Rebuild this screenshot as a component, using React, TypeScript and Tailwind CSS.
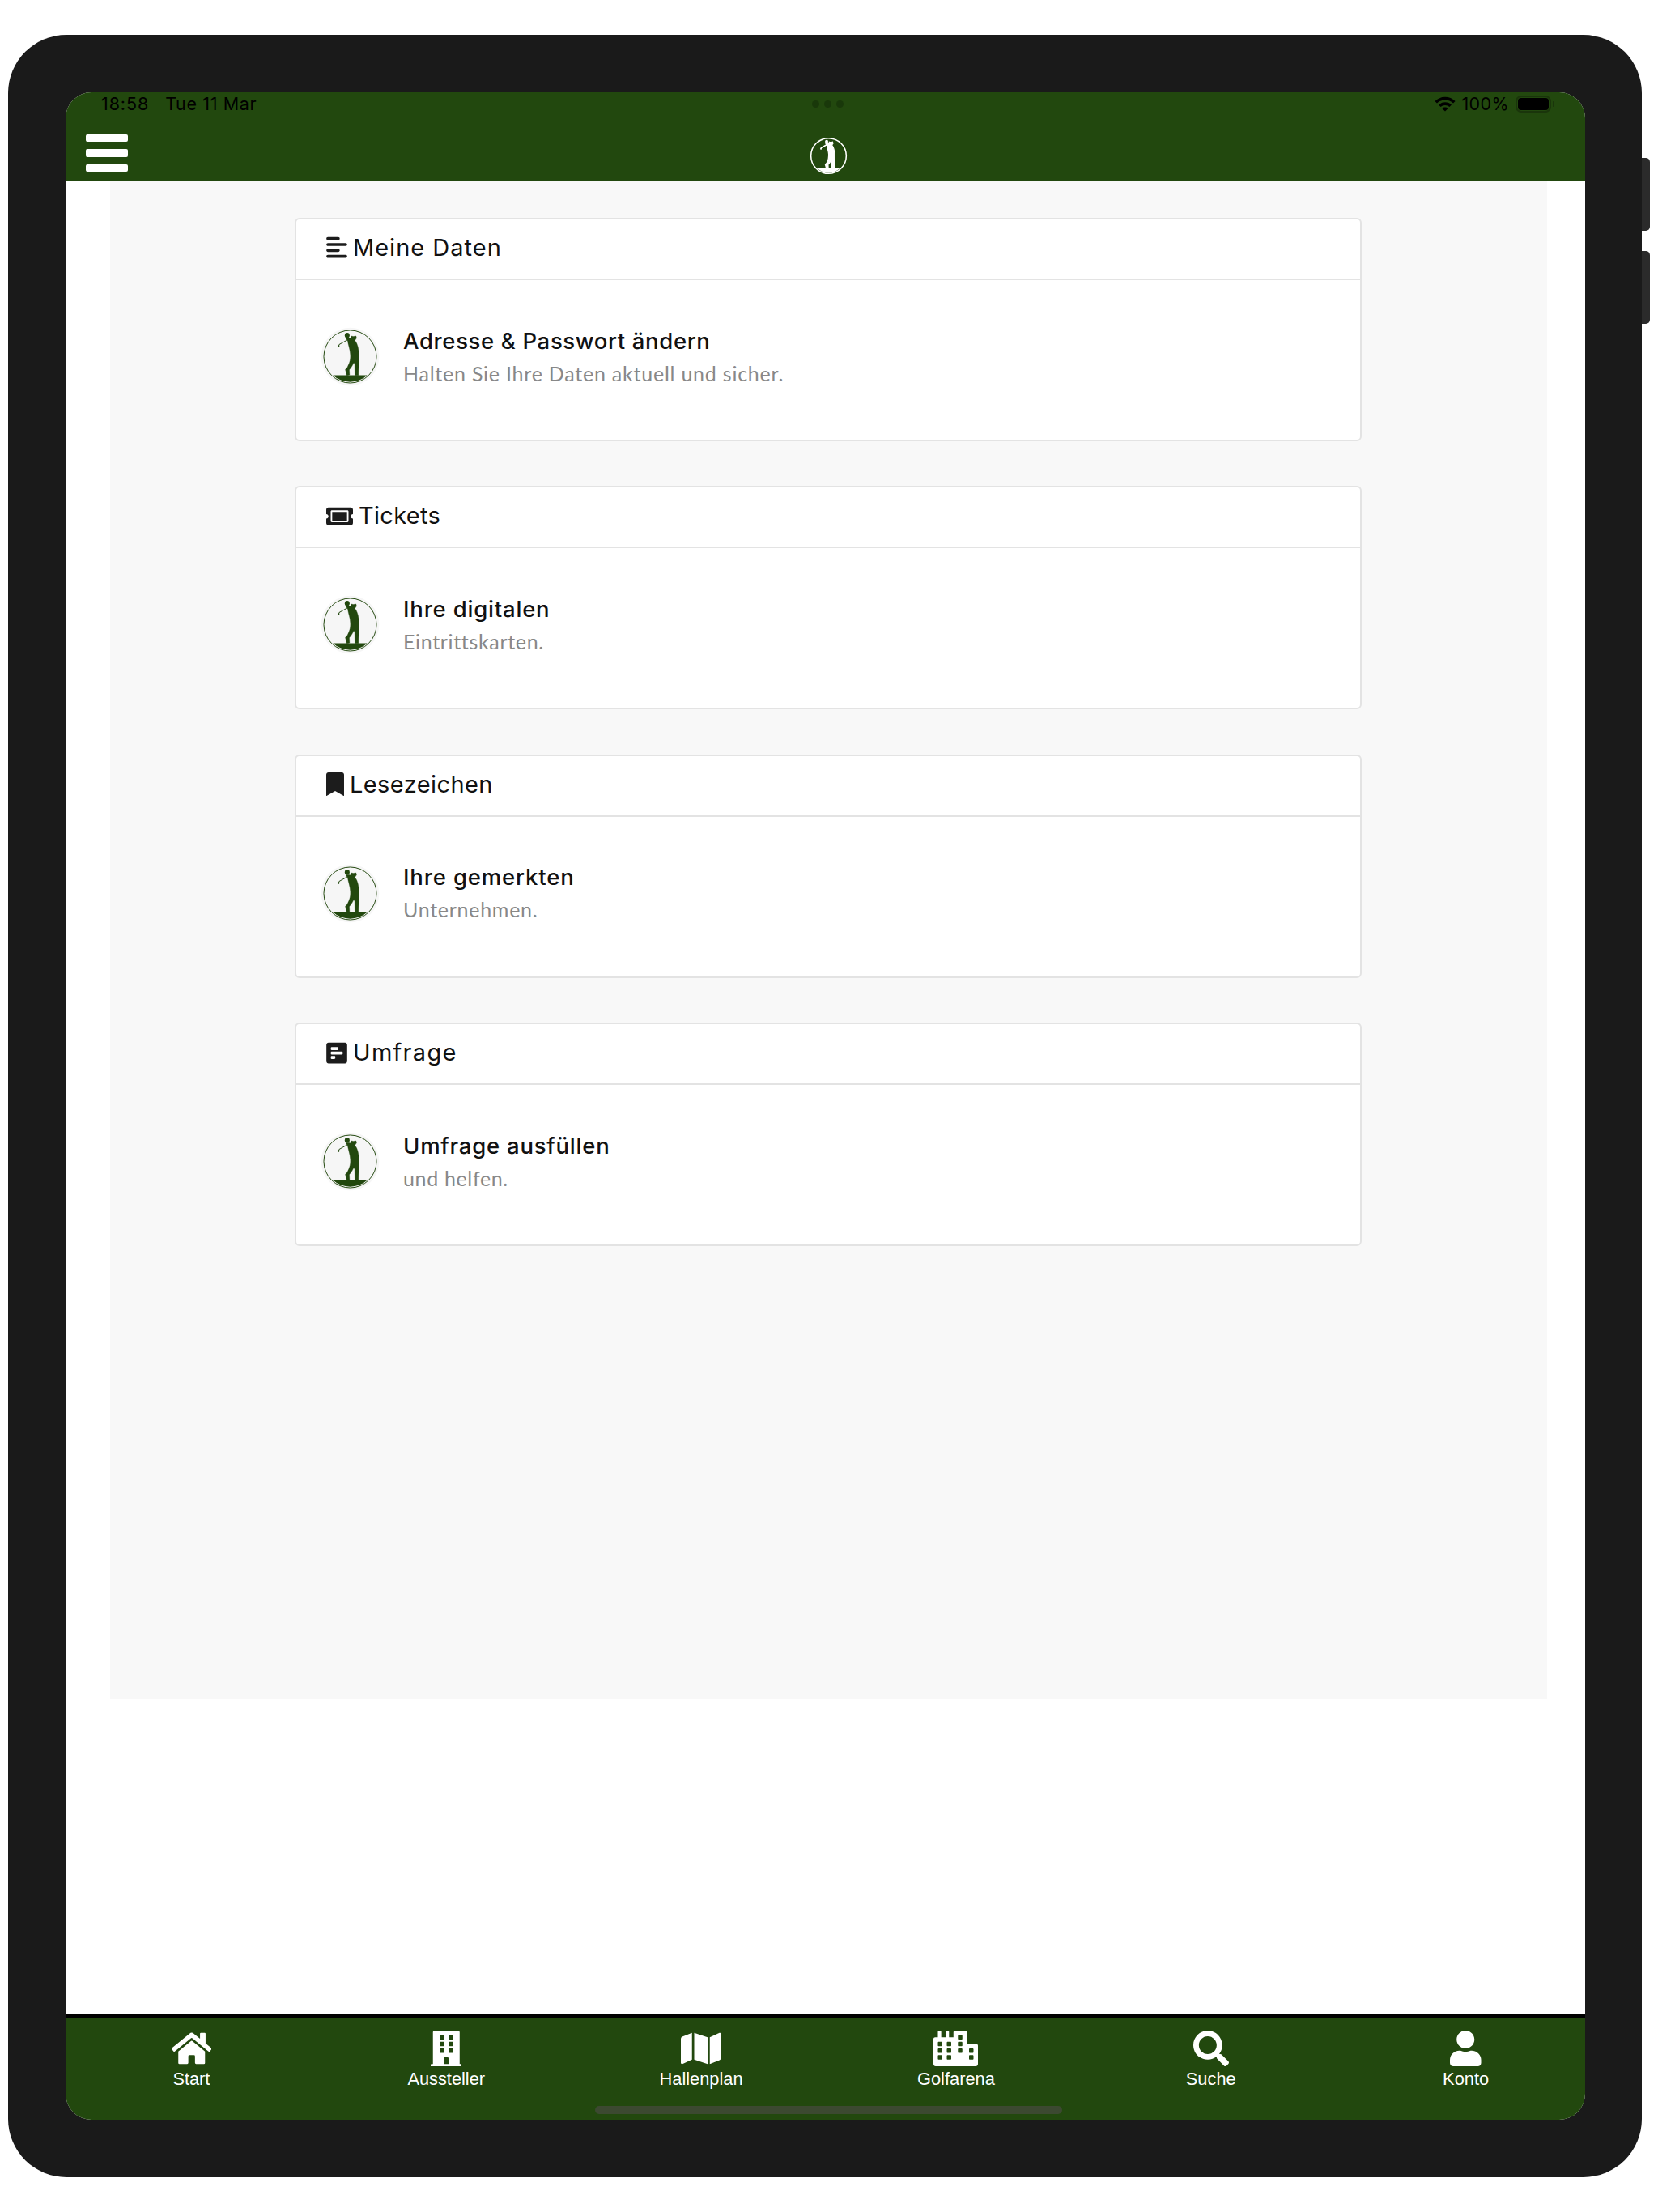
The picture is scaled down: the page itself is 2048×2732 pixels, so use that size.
import type { ComponentType } from "react";
import {
  FaBookmark,
  FaBuilding,
  FaCity,
  FaHome,
  FaMap,
  FaPollH,
  FaSearch,
  FaTicketAlt,
  FaUser,
} from "react-icons/fa";
import { FaAlignLeft } from "react-icons/fa6";

type Icon = ComponentType<{ className?: string }>;

interface AccountCard {
  icon: Icon;
  iconClass: string;
  heading: string;
  headingClass: string;
  title: string;
  titleClass: string;
  text: string;
  textClass: string;
}

const cards: AccountCard[] = [
  {
    icon: FaAlignLeft,
    iconClass: "w-[26px]",
    heading: "Meine Daten",
    headingClass: "tracking-[1px]",
    title: "Adresse & Passwort ändern",
    titleClass: "tracking-[0.65px]",
    text: "Halten Sie Ihre Daten aktuell und sicher.",
    textClass: "tracking-[0.77px]",
  },
  {
    icon: FaTicketAlt,
    iconClass: "w-[33px]",
    heading: "Tickets",
    headingClass: "tracking-[0.3px]",
    title: "Ihre digitalen",
    titleClass: "tracking-[0.8px]",
    text: "Eintrittskarten.",
    textClass: "tracking-[0.67px]",
  },
  {
    icon: FaBookmark,
    iconClass: "w-[22px]",
    heading: "Lesezeichen",
    headingClass: "tracking-[0.4px]",
    title: "Ihre gemerkten",
    titleClass: "tracking-[0.85px]",
    text: "Unternehmen.",
    textClass: "tracking-[0.72px]",
  },
  {
    icon: FaPollH,
    iconClass: "w-[26px]",
    heading: "Umfrage",
    headingClass: "tracking-[1.3px]",
    title: "Umfrage ausfüllen",
    titleClass: "tracking-[0.77px]",
    text: "und helfen.",
    textClass: "tracking-[0.65px]",
  },
];

const tabs: { icon: Icon; iconClass: string; label: string }[] = [
  { icon: FaHome, iconClass: "w-[49.5px]", label: "Start" },
  { icon: FaBuilding, iconClass: "w-[38.5px]", label: "Aussteller" },
  { icon: FaMap, iconClass: "w-[49.5px]", label: "Hallenplan" },
  { icon: FaCity, iconClass: "w-[55px]", label: "Golfarena" },
  { icon: FaSearch, iconClass: "w-[44px]", label: "Suche" },
  { icon: FaUser, iconClass: "w-[38.5px]", label: "Konto" },
];

interface GolferLogoProps {
  className?: string;
  ring?: number;
  fill?: string;
  weight?: number;
}

function GolferLogo({ className, ring = 3, fill = "none", weight = 1 }: GolferLogoProps) {
  return (
    <svg viewBox="48 56 220 220" className={className}>
      <circle cx="158" cy="166" r="108" fill={fill} />
      <circle cx="158" cy="166" r="98" fill="none" stroke="currentColor" strokeWidth={ring} />
      <path d="M94 235H222A94 94 0 0 1 94 235Z" fill="currentColor" />
      <ellipse cx="147" cy="87" rx="9" ry="10" fill="currentColor" />
      <path
        d="M142 97L152 96L160 98L162 89L170 91L180 89L182 97L176 106C186 118 191 140 191 162C191 186 189 208 189 236H176L175 196L172 188C167 200 160 209 155 215L156 234L146 237L140 214L148 205C154 192 160 182 159 160C158 138 151 124 149 108Z"
        fill="currentColor"
        stroke="currentColor"
        strokeWidth={weight}
      />
      <path d="M149 103L117 121L115 130" fill="none" stroke="currentColor" strokeWidth={ring} />
      <circle cx="115" cy="127" r="3.5" fill="currentColor" />
    </svg>
  );
}

function StatusBar() {
  return (
    <div className="flex h-[29px] items-center justify-between pr-[38px] pb-[1px] pl-[44px] font-['Inter',sans-serif] text-[21.5px] leading-[28px] text-black">
      <div className="flex w-[240px] gap-[20px]">
        <span className="tracking-[0.9px]">18:58</span>
        <span className="tracking-[0.65px]">Tue 11 Mar</span>
      </div>
      <div className="flex gap-[6px] text-[#19380a]">
        <span className="size-[9px] rounded-full bg-current" />
        <span className="size-[9px] rounded-full bg-current" />
        <span className="size-[9px] rounded-full bg-current" />
      </div>
      <div className="flex w-[240px] items-center justify-end">
        <svg viewBox="0 0 26 19" className="h-[19px] w-[26px]" fill="none" stroke="currentColor" strokeWidth="3.6">
          <path d="M1.7 7.3C8 1 18 1 24.3 7.3" />
          <path d="M6.3 11.8C10 8.2 16 8.2 19.7 11.8" />
          <path d="M13 18.4L9.4 14.9C11.4 13.1 14.6 13.1 16.6 14.9Z" fill="currentColor" stroke="none" />
        </svg>
        <span className="ml-[7px] tracking-[0.4px]">100%</span>
        <span className="ml-[8px] flex h-[21px] w-[44px] rounded-[7px] border-2 border-[#1a350b] p-[1px]">
          <span className="flex-1 rounded-[4px] bg-black" />
        </span>
        <span className="ml-[2px] h-[7px] w-[2px] rounded-r bg-[#1a350b]" />
      </div>
    </div>
  );
}

function Card({ card }: { card: AccountCard }) {
  const HeadIcon = card.icon;
  return (
    <section className="flex h-[276px] flex-col rounded-[6px] border-2 border-[#e3e3e3] bg-white">
      <div className="flex h-[75px] items-center border-b-2 border-[#e3e3e3] pl-[37px] text-[#1c1c1c]">
        <HeadIcon className={`mb-[3px] h-[29.3px] shrink-0 ${card.iconClass}`} />
        <h2 className={`mb-[3px] ml-[7px] font-['Inter',sans-serif] text-[29px] leading-[40px] text-[#111] ${card.headingClass}`}>
          {card.heading}
        </h2>
      </div>
      <div className="flex flex-1 items-center pb-[8px] pl-[30px]">
        <GolferLogo className="size-[73px] text-[#22480e]" fill="#f6f6f6" />
        <div className="ml-[29px]">
          <h3 className={`font-['Inter',sans-serif] text-[27.5px] leading-[40px] font-medium text-[#111] ${card.titleClass}`}>
            {card.title}
          </h3>
          <p className={`font-['Lato',sans-serif] text-[25px] leading-[40px] text-[#888] ${card.textClass}`}>
            {card.text}
          </p>
        </div>
      </div>
    </section>
  );
}

export default function App() {
  return (
    <div className="flex h-[2732px] w-[2048px] overflow-hidden bg-white pt-[43px] pl-[10px]">
      {/* Device */}
      <div className="h-[2646px] w-[2018px] rounded-[72px] bg-[#1a1a1a] pt-[71px] pl-[71px]">
        <div className="flex h-[2504px] w-[1877px] flex-col overflow-hidden rounded-[32px] bg-white">
          <header className="h-[109px] shrink-0 bg-[#22480e]">
            <StatusBar />
            <div className="flex items-start justify-between px-[25px]">
              <div className="mt-[23px] flex w-[52px] flex-col gap-[9px]">
                <span className="h-[9.3px] rounded-[2px] bg-white" />
                <span className="h-[9.3px] rounded-[2px] bg-white" />
                <span className="h-[9.3px] rounded-[2px] bg-white" />
              </div>
              <GolferLogo className="mt-[25px] ml-[8px] size-[49px] text-white" ring={7} weight={6} />
              <span className="w-[52px]" />
            </div>
          </header>

          {/* Account cards */}
          <main className="mr-[47px] ml-[55px] h-[1875px] bg-[#f8f8f8] pt-[46px] pr-[229px] pl-[228px]">
            <div className="flex flex-col gap-[55.4px]">
              {cards.map((card) => (
                <Card key={card.heading} card={card} />
              ))}
            </div>
          </main>

          {/* Tab bar */}
          <footer className="mt-auto flex h-[130px] shrink-0 flex-col border-t-4 border-black bg-[#22480e]">
            <nav className="-ml-[2px] grid w-[1889px] grid-cols-6 pt-[16px]">
              {tabs.map(({ icon: TabIcon, iconClass, label }) => (
                <div key={label} className="flex flex-col items-center text-white">
                  <TabIcon className={`h-[44px] ${iconClass}`} />
                  <span className="mt-[3px] font-['Liberation_Sans',sans-serif] text-[21.8px] leading-[26px]">
                    {label}
                  </span>
                </div>
              ))}
            </nav>
            <div className="mt-auto mb-[7px] ml-[654px] h-[10px] w-[577px] rounded-full bg-[#3c4931]" />
          </footer>
        </div>
      </div>

      {/* Volume buttons */}
      <div className="flex flex-col gap-[25px] pt-[152px]">
        <span className="h-[90px] w-[10px] rounded-r-[5px] bg-[#2b2b2b]" />
        <span className="h-[90px] w-[10px] rounded-r-[5px] bg-[#2b2b2b]" />
      </div>
    </div>
  );
}
